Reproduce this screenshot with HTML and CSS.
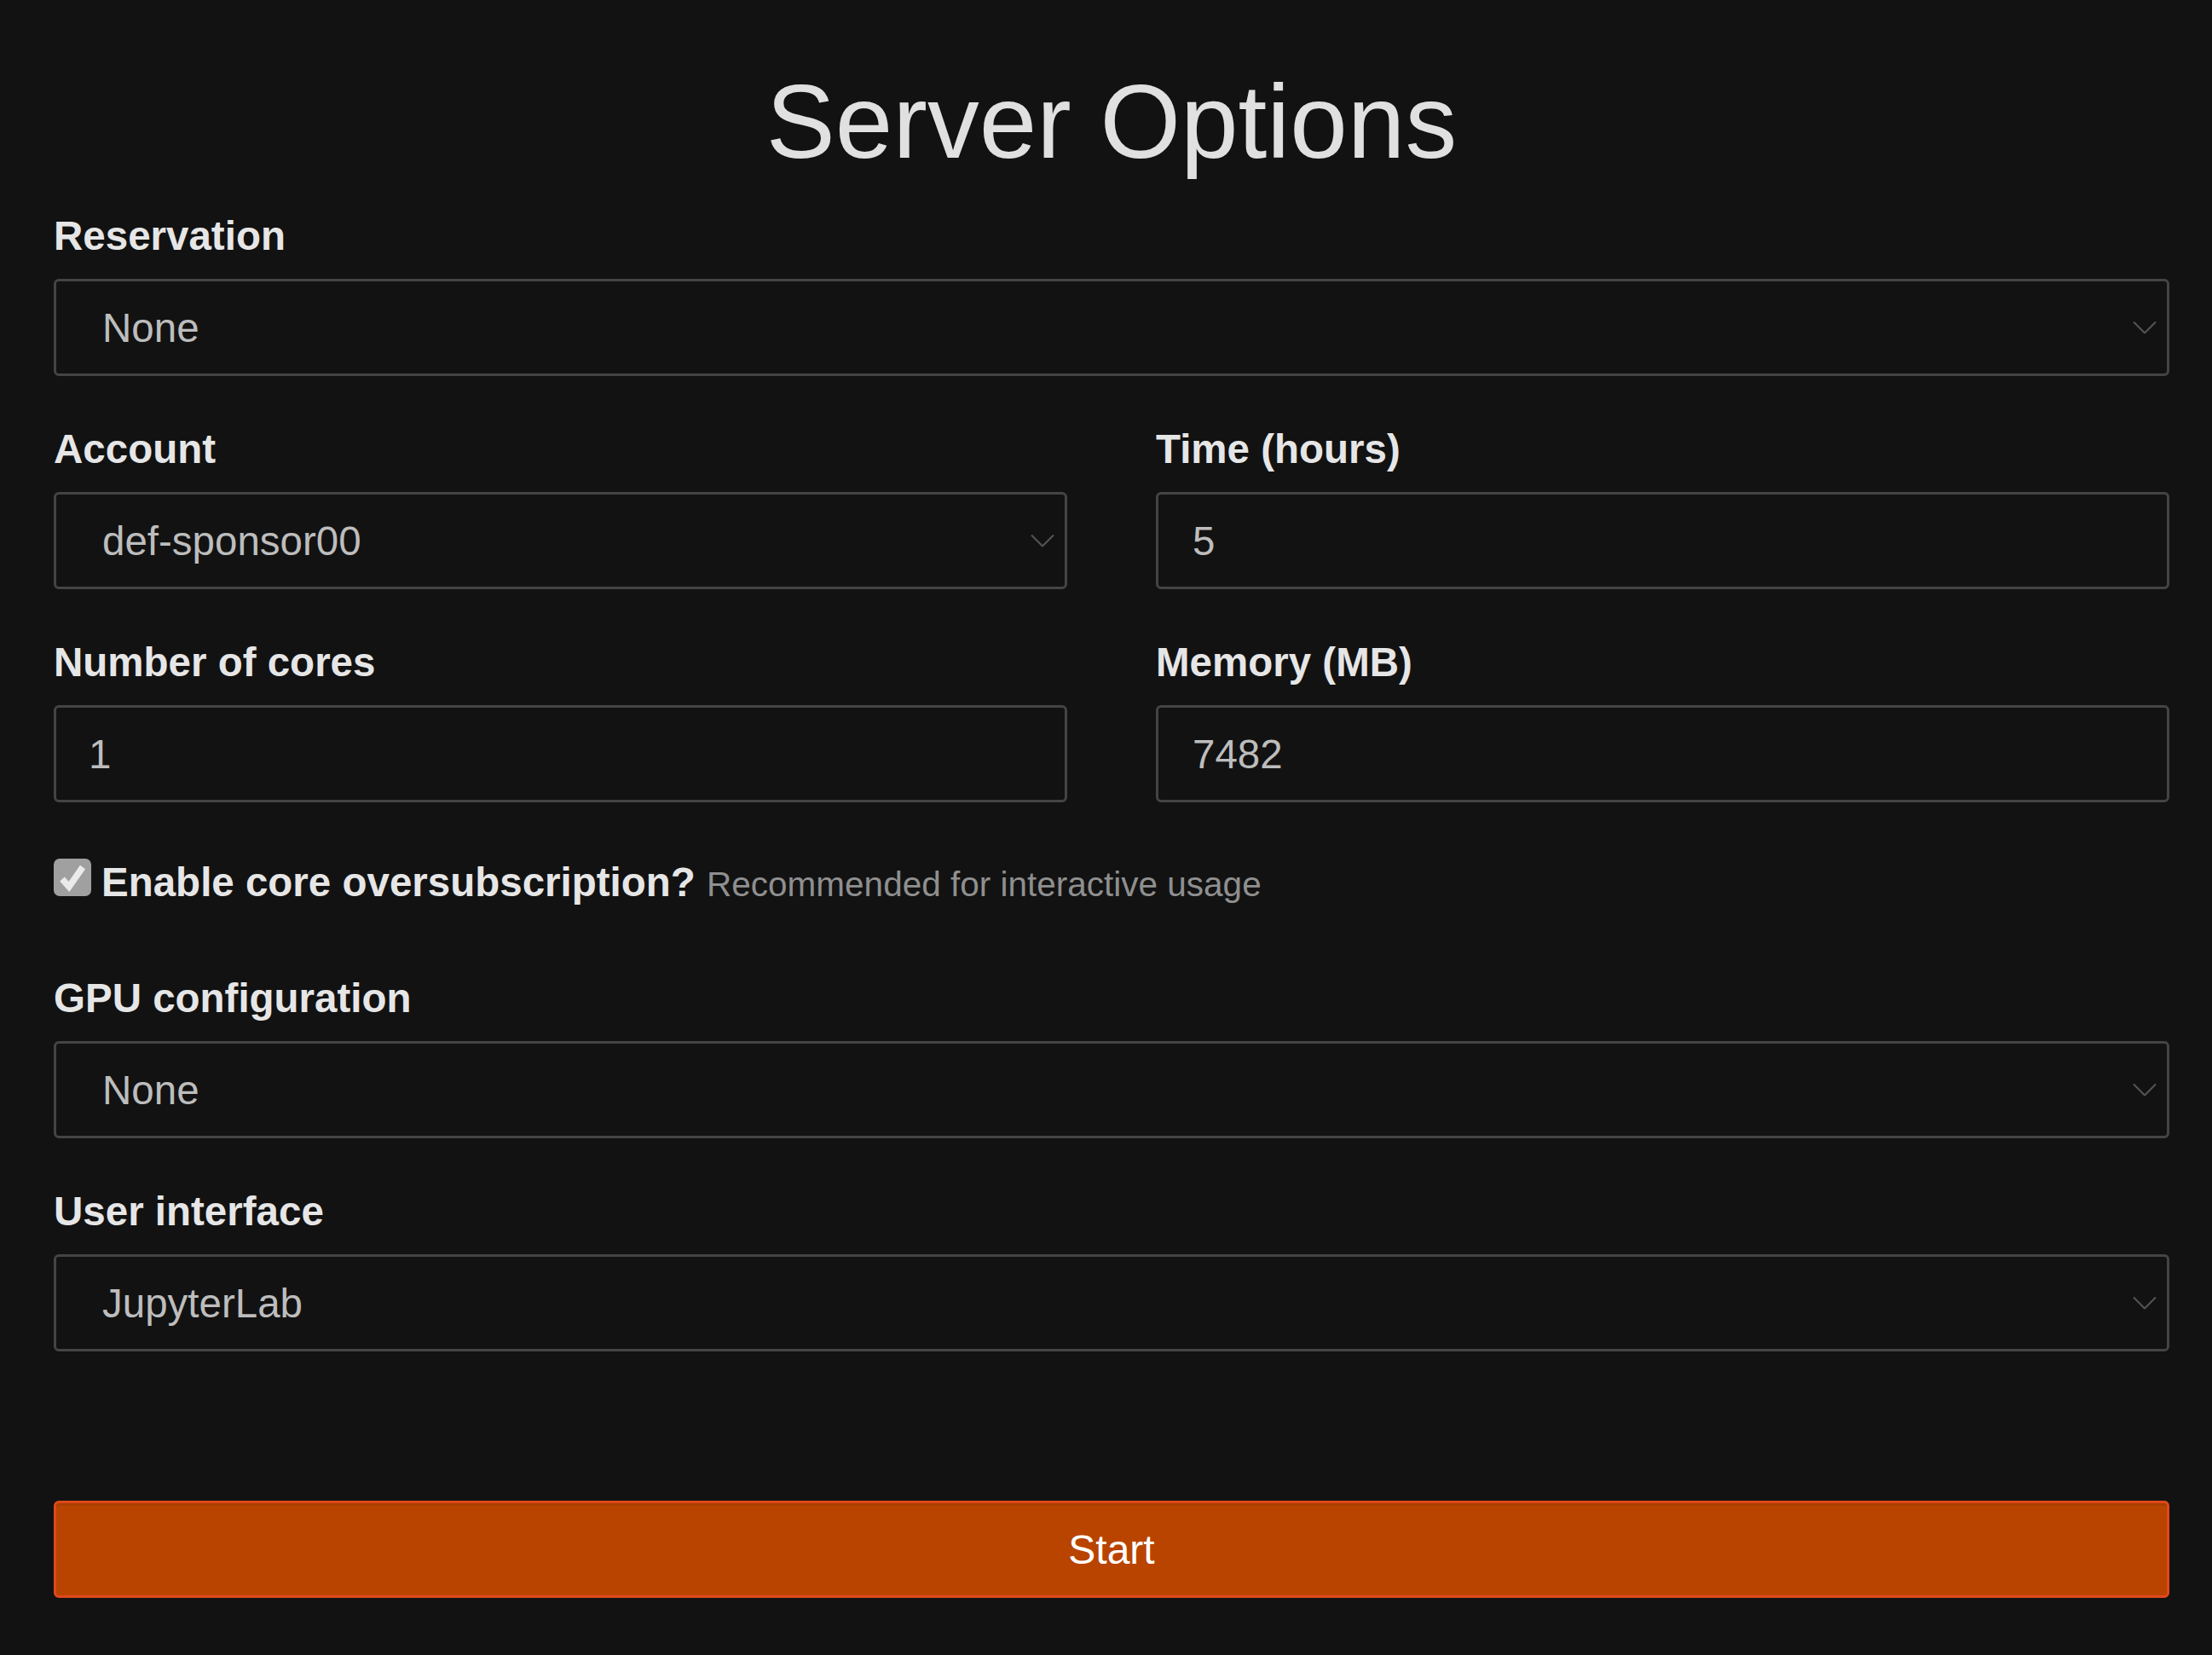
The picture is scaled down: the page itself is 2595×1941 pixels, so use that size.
FILE: index.html
```html
<!DOCTYPE html>
<html lang="en">
<head>
<meta charset="utf-8">
<title>Server Options</title>
<link rel="stylesheet" href="styles.css">
</head>
<body>
<main class="page">
  <h1 class="title">Server Options</h1>
  <form class="form">
    <div class="field">
      <label class="label" for="reservation">Reservation</label>
      <div class="select-wrap">
        <select id="reservation" class="control select"><option>None</option></select>
        <svg class="chevron" width="28" height="15" viewBox="0 0 28 15"><polyline points="1,1 14,14 27,1" fill="none" stroke="#555" stroke-width="2"/></svg>
      </div>
    </div>
    <div class="row">
      <div class="field">
        <label class="label" for="account">Account</label>
        <div class="select-wrap">
          <select id="account" class="control select"><option>def-sponsor00</option></select>
          <svg class="chevron" width="28" height="15" viewBox="0 0 28 15"><polyline points="1,1 14,14 27,1" fill="none" stroke="#555" stroke-width="2"/></svg>
        </div>
      </div>
      <div class="field">
        <label class="label" for="time">Time (hours)</label>
        <input id="time" class="control input" type="text" value="5">
      </div>
    </div>
    <div class="row">
      <div class="field">
        <label class="label" for="cores">Number of cores</label>
        <input id="cores" class="control input cores" type="text" value="1">
      </div>
      <div class="field">
        <label class="label" for="mem">Memory (MB)</label>
        <input id="mem" class="control input" type="text" value="7482">
      </div>
    </div>
    <div class="check-row">
      <span class="checkbox"><svg width="44" height="44" viewBox="0 0 44 44"><polyline points="10,24 18,33 34,10" fill="none" stroke="#ebebeb" stroke-width="7.5" stroke-linecap="butt" stroke-linejoin="miter"/></svg></span><span class="check-label">Enable core oversubscription?</span> <span class="hint">Recommended for interactive usage</span>
    </div>
    <div class="field">
      <label class="label" for="gpu">GPU configuration</label>
      <div class="select-wrap">
        <select id="gpu" class="control select"><option>None</option></select>
        <svg class="chevron" width="28" height="15" viewBox="0 0 28 15"><polyline points="1,1 14,14 27,1" fill="none" stroke="#555" stroke-width="2"/></svg>
      </div>
    </div>
    <div class="field">
      <label class="label" for="ui">User interface</label>
      <div class="select-wrap">
        <select id="ui" class="control select"><option>JupyterLab</option></select>
        <svg class="chevron" width="28" height="15" viewBox="0 0 28 15"><polyline points="1,1 14,14 27,1" fill="none" stroke="#555" stroke-width="2"/></svg>
      </div>
    </div>
    <button type="button" class="start">Start</button>
  </form>
</main>
</body>
</html>
```

FILE: styles.css
```css
html, body {
  margin: 0;
  padding: 0;
  background: #121212;
}
body {
  font-family: "Liberation Sans", Arial, sans-serif;
  color: #e6e6e6;
}
.page {
  padding: 0 50px 0 63px;
}
.title {
  margin: 71px 0 26px;
  font-size: 121.5px;
  line-height: 144px;
  font-weight: 400;
  text-align: center;
  color: #e0e0e0;
}
.form {
  display: flex;
  flex-direction: column;
}
.field {
  display: flex;
  flex-direction: column;
  margin-bottom: 50px;
}
.row {
  display: grid;
  grid-template-columns: 1fr 1fr;
  column-gap: 104px;
}
.label {
  font-size: 47.5px;
  line-height: 72px;
  font-weight: 700;
  color: #e6e6e6;
  margin-bottom: 14px;
}
.control {
  display: block;
  box-sizing: border-box;
  width: 100%;
  height: 114px;
  margin: 0;
  border: 3px solid #444;
  border-radius: 6px;
  background: #121212;
  color: #bdbdbd;
  font-family: "Liberation Sans", Arial, sans-serif;
  font-size: 47.5px;
  line-height: 55px;
  outline: none;
}
.input {
  padding: 0 36px 0 40px;
}
.input.cores {
  padding-left: 38px;
}
.select {
  appearance: none;
  -webkit-appearance: none;
  padding: 0 60px 0 54px;
}
.select-wrap {
  position: relative;
}
.chevron {
  position: absolute;
  right: 15px;
  top: 50%;
  transform: translateY(-50%);
  pointer-events: none;
}
.check-row {
  margin-top: 8px;
  font-size: 47.5px;
  line-height: 72px;
  margin-bottom: 62px;
}
.checkbox {
  display: inline-block;
  width: 44px;
  height: 44px;
  border-radius: 7px;
  background: #a0a0a0;
  vertical-align: baseline;
  margin-right: 12px;
}
.checkbox svg {
  display: block;
}
.check-label {
  font-weight: 700;
  color: #e6e6e6;
}
.hint {
  font-size: 40.5px;
  color: #8f8f8f;
}
.start {
  box-sizing: border-box;
  width: 100%;
  height: 114px;
  margin-top: 125px;
  border: 3px solid #e0481c;
  border-radius: 6px;
  background: #b94400;
  box-shadow: inset 0 3px 0 rgba(0, 0, 0, 0.08);
  color: #ffffff;
  font-family: "Liberation Sans", Arial, sans-serif;
  font-size: 48px;
  line-height: 55px;
  text-align: center;
  padding: 0;
}
```
